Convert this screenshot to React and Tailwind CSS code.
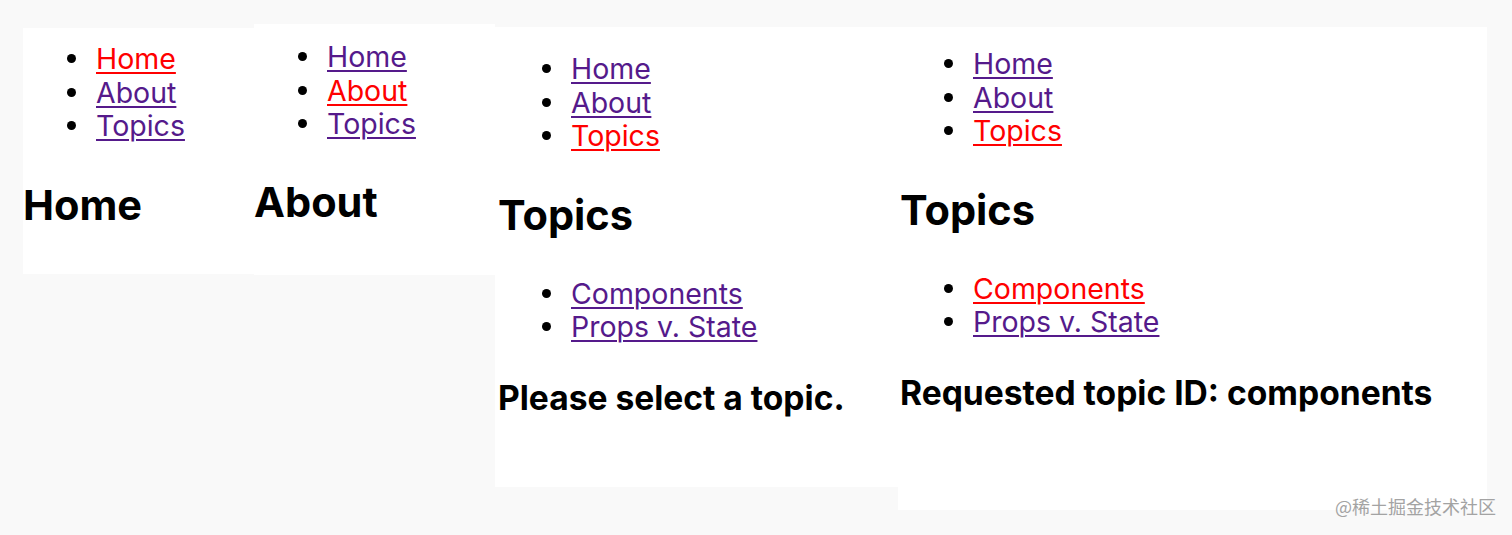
import React from 'react';

const NAV = ['Home', 'About', 'Topics'];
const TOPICS = ['Components', 'Props v. State'];

const LinkList = ({ items, active, className = '' }) => (
  <ul className={`pl-[44px] ${className}`}>
    {items.map((item) => (
      <li key={item} className="flex items-center text-[28.5px] leading-[33.5px]">
        <span className="mr-[20px] h-[9px] w-[9px] shrink-0 rounded-full bg-black" />
        <a
          href="#"
          className={`underline decoration-[1.5px] underline-offset-[3px] ${
            item === active ? 'text-[#ff0000]' : 'text-[#551a8b]'
          }`}
        >
          {item}
        </a>
      </li>
    ))}
  </ul>
);

const Panel = ({ className, children }) => (
  <div className={`bg-white shrink-0 ${className}`}>{children}</div>
);

export default function App() {
  return (
    <div
      className="relative min-h-[535px] w-[1512px] overflow-hidden bg-[#f9f9f9] text-black"
      style={{ fontFamily: 'Inter, "Noto Sans", sans-serif' }}
    >
      <div className="flex items-start pl-[23px]">
        {/* Home */}
        <Panel className="mt-[28px] h-[246px] w-[231px] pt-[14px]">
          <LinkList items={NAV} active="Home" />
          <h2 className="mt-[37px] text-[41.5px] font-bold leading-[51px]">Home</h2>
        </Panel>

        {/* About */}
        <Panel className="mt-[24px] h-[251px] w-[241px] pt-[16px]">
          <LinkList items={NAV} active="About" className="pl-[43px]" />
          <h2 className="mt-[36px] text-[41.5px] font-bold leading-[51px]">About</h2>
        </Panel>

        {/* Topics, nothing selected */}
        <Panel className="mt-[27px] h-[460px] w-[403px] pl-[3px] pt-[25px]">
          <LinkList items={NAV} active="Topics" />
          <h2 className="mt-[37px] text-[41.5px] font-bold leading-[51px]">Topics</h2>
          <LinkList items={TOPICS} className="mt-[36px]" />
          <h3 className="mt-[34px] text-[33.6px] font-bold leading-[40px]">Please select a topic.</h3>
        </Panel>

        {/* Topics, components selected */}
        <Panel className="mt-[27px] h-[483px] w-[589px] pl-[2px] pt-[20px]">
          <LinkList items={NAV} active="Topics" />
          <h2 className="mt-[37px] text-[41.5px] font-bold leading-[51px]">Topics</h2>
          <LinkList items={TOPICS} active="Components" className="mt-[36px]" />
          <h3 className="mt-[34px] text-[33.6px] font-bold leading-[40px]">
            Requested topic ID: components
          </h3>
        </Panel>
      </div>

      <div
        className="absolute right-[16px] bottom-[17px] text-[18px] leading-[24px] text-[#a3a3a3]"
        style={{ fontFamily: '"Noto Sans CJK SC", "Noto Sans", sans-serif' }}
      >
        @稀土掘金技术社区
      </div>
    </div>
  );
}
